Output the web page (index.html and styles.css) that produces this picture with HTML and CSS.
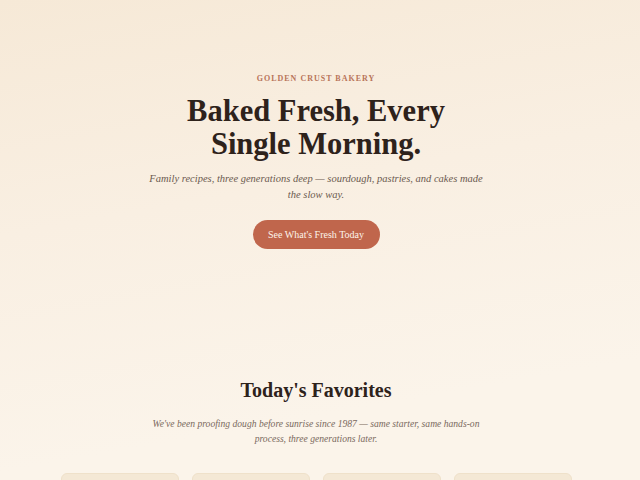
FILE: index.html
```html
<!DOCTYPE html>
<html lang="en">
<head>
<meta charset="utf-8">
<title>Golden Crust Bakery</title>
<link rel="stylesheet" href="styles.css">
</head>
<body>
<main class="page">
  <section class="hero">
    <p class="eyebrow">GOLDEN CRUST BAKERY</p>
    <h1 class="hero-title">Baked Fresh, Every<br>Single Morning.</h1>
    <p class="hero-sub">Family recipes, three generations deep — sourdough, pastries, and cakes made the slow way.</p>
    <a class="btn" href="#favorites">See What's Fresh Today</a>
  </section>
  <section class="favorites" id="favorites">
    <h2 class="section-title">Today's Favorites</h2>
    <p class="section-sub">We've been proofing dough before sunrise since 1987 — same starter, same hands-on process, three generations later.</p>
    <div class="cards">
      <div class="card"></div>
      <div class="card"></div>
      <div class="card"></div>
      <div class="card"></div>
    </div>
  </section>
</main>
</body>
</html>
```

FILE: styles.css
```css
html, body {
  margin: 0;
  padding: 0;
}
body {
  background: #fbf4ea;
  font-family: "Liberation Serif", "DejaVu Serif", serif;
  color: #2e221b;
  overflow: hidden;
}
.page {
  padding-right: 8px;
  background: linear-gradient(170deg, #f6e9d7 0%, #f9efe2 30%, #fbf4ea 60%, #fbf4ea 100%);
}
.hero {
  display: flex;
  flex-direction: column;
  align-items: center;
  text-align: center;
  padding: 72px 0 0;
}
.eyebrow {
  margin: 0;
  font-size: 8px;
  line-height: 14px;
  letter-spacing: 1px;
  font-weight: bold;
  color: #b8745a;
}
.hero-title {
  margin: 8.5px 0 0;
  font-size: 30.5px;
  line-height: 33px;
  font-weight: bold;
  color: #2e221b;
}
.hero-sub {
  margin: 10.5px 0 0;
  width: 345px;
  font-size: 10.5px;
  line-height: 16px;
  font-style: italic;
  color: #6b5a4f;
}
.btn {
  margin-top: 17px;
  display: inline-flex;
  align-items: center;
  justify-content: center;
  width: 127px;
  height: 29px;
  border-radius: 15px;
  background: #c0664c;
  color: #fdf3ea;
  font-size: 10px;
  text-decoration: none;
}
.favorites {
  display: flex;
  flex-direction: column;
  align-items: center;
  text-align: center;
  padding-top: 127px;
}
.section-title {
  margin: 0;
  font-size: 20px;
  line-height: 28px;
  font-weight: bold;
  color: #2e221b;
}
.section-sub {
  margin: 11.5px 0 0;
  width: 335px;
  font-size: 9.6px;
  line-height: 15px;
  font-style: italic;
  color: #7a695d;
}
.cards {
  margin-top: 27.5px;
  display: grid;
  grid-template-columns: repeat(4, 118px);
  gap: 13px;
}
.card {
  height: 200px;
  background: #f4e8d5;
  border: 1px solid #efe1ca;
  border-radius: 6px;
}
```
